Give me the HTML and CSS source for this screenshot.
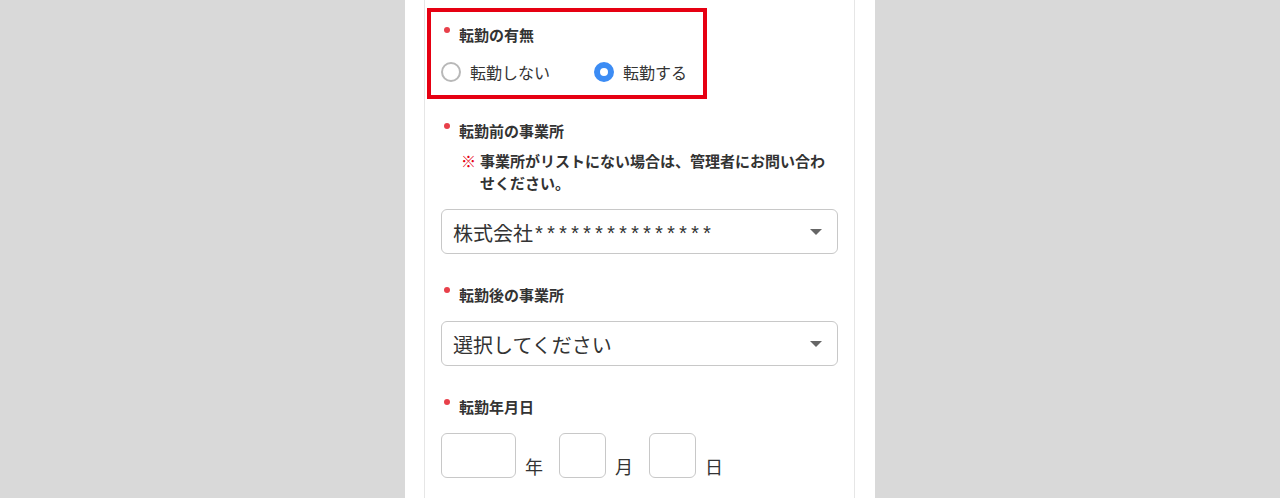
FILE: index.html
```html
<!DOCTYPE html>
<html lang="ja">
<head>
    <meta charset="UTF-8">
    <meta name="viewport" content="width=device-width, initial-scale=1.0">
    <title>転勤登録</title>
    <link rel="stylesheet" href="styles.css">
</head>
<body>
    <div class="page">
        <form class="card">
            <div class="field highlight">
                <div class="label required">転勤の有無</div>
                <div class="radios">
                    <label class="radio">
                        <input type="radio" name="transfer" value="0">
                        <span class="radio-mark"></span>
                        <span>転勤しない</span>
                    </label>
                    <label class="radio">
                        <input type="radio" name="transfer" value="1" checked>
                        <span class="radio-mark"></span>
                        <span>転勤する</span>
                    </label>
                </div>
            </div>

            <div class="field">
                <div class="label required">転勤前の事業所</div>
                <p class="note">
                    <span class="note-mark">※</span>
                    <span>事業所がリストにない場合は、管理者にお問い合わせください。</span>
                </p>
                <div class="select">
                    <select name="from_office">
                        <option>株式会社***************</option>
                    </select>
                </div>
            </div>

            <div class="field">
                <div class="label required">転勤後の事業所</div>
                <div class="select">
                    <select name="to_office">
                        <option>選択してください</option>
                    </select>
                </div>
            </div>

            <div class="field">
                <div class="label required">転勤年月日</div>
                <div class="date">
                    <input class="input year" type="text" name="year">
                    <span class="unit">年</span>
                    <input class="input short" type="text" name="month">
                    <span class="unit">月</span>
                    <input class="input short" type="text" name="day">
                    <span class="unit">日</span>
                </div>
            </div>
        </form>
    </div>
</body>
</html>
```

FILE: styles.css
```css
html, body {
    height: 100%;
}
body {
    margin: 0;
    background: #d9d9d9;
    font-family: "Noto Sans CJK JP", "Noto Sans", sans-serif;
    color: #333;
}
.page {
    width: 470px;
    min-height: 100%;
    margin: 0 auto;
    background: #fff;
    display: flex;
}
.card {
    flex: 1;
    margin: 0 20px 0 19px;
    padding: 8px 16px 0 16px;
    border-left: 1px solid #e6e6e6;
    border-right: 1px solid #e6e6e6;
}
.field {
    margin-bottom: 31px;
}
.field.highlight {
    box-sizing: border-box;
    width: 280px;
    height: 91px;
    margin: 0 0 22px -14px;
    padding: 13px 0 0 10px;
    border: 4px solid #e60012;
}
.label {
    position: relative;
    padding-left: 18px;
    font-size: 15px;
    line-height: 20px;
    font-weight: bold;
    margin-bottom: 16px;
}
.label.required::before {
    content: "";
    position: absolute;
    left: 3px;
    top: 2px;
    width: 6px;
    height: 6px;
    border-radius: 50%;
    background: #e8404a;
}
.highlight .label {
    margin-bottom: 15px;
}
.radios {
    display: flex;
    gap: 44px;
}
.radio {
    display: flex;
    align-items: center;
    gap: 9px;
    height: 24px;
    font-size: 16px;
    cursor: pointer;
}
.radio input {
    display: none;
}
.radio-mark {
    box-sizing: border-box;
    width: 20px;
    height: 20px;
    border: 2px solid #b8b8b8;
    border-radius: 50%;
}
.radio input:checked + .radio-mark {
    border: 6px solid #3c8cf4;
    background: #fff;
}
.note {
    display: flex;
    margin: -7px 0 15px 20px;
    font-size: 15px;
    line-height: 22px;
    font-weight: bold;
}
.note-mark {
    flex: none;
    width: 19px;
    color: #e60012;
}
.select {
    position: relative;
}
.select::after {
    content: "";
    position: absolute;
    right: 16px;
    top: 20px;
    border-left: 6px solid transparent;
    border-right: 6px solid transparent;
    border-top: 6px solid #666;
    pointer-events: none;
}
.select select {
    box-sizing: border-box;
    width: 100%;
    height: 45px;
    padding: 8px 40px 0 11px;
    border: 1px solid #c8c8c8;
    border-radius: 6px;
    background: #fff;
    font-family: "Liberation Mono", "Noto Sans CJK JP", monospace;
    font-size: 20px;
    color: #333;
    appearance: none;
}
.date {
    display: flex;
    align-items: flex-end;
}
.input {
    box-sizing: border-box;
    height: 45px;
    border: 1px solid #c8c8c8;
    border-radius: 6px;
    font-family: inherit;
    font-size: 18px;
    padding: 0 8px;
}
.input.year {
    width: 75px;
}
.input.short {
    width: 47px;
}
.unit {
    font-size: 18px;
    line-height: 24px;
    margin: 0 16px 0 9px;
}
```
